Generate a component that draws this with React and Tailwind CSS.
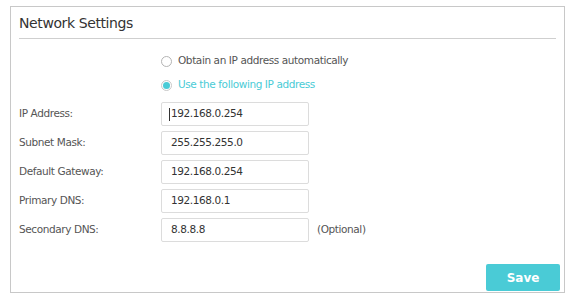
import React from 'react';

const FIELDS = [
  { label: 'IP Address:', value: '192.168.0.254', caret: true },
  { label: 'Subnet Mask:', value: '255.255.255.0' },
  { label: 'Default Gateway:', value: '192.168.0.254' },
  { label: 'Primary DNS:', value: '192.168.0.1' },
  { label: 'Secondary DNS:', value: '8.8.8.8', note: '(Optional)' },
];

const Radio = ({ checked, label }) => (
  <div className="flex items-center h-[24px]">
    <span
      className={`w-[11px] h-[11px] rounded-full border flex items-center justify-center ${
        checked ? 'border-[#c8c8c8]' : 'border-[#b4b4b4]'
      }`}
    >
      {checked && <span className="w-[7px] h-[7px] rounded-full bg-[#4acbd6]" />}
    </span>
    <span className={`ml-[6px] ${checked ? 'text-[#4acbd6]' : 'text-[#555]'}`}>{label}</span>
  </div>
);

export default function App() {
  return (
    <div className="w-[573px] h-[299px] bg-white pt-[6px] pl-[10px] font-['DejaVu_Sans',sans-serif] text-[10.5px] tracking-[-0.4px]">
      <div className="w-[555px] h-[287px] border border-[#c8c8c8] flex flex-col">
        {/* Header */}
        <div className="mx-[8px] h-[32px] border-b border-[#cfcfcf] flex items-center">
          <h1 className="text-[14px] text-[#333] mt-[1px]">Network Settings</h1>
        </div>

        {/* Mode */}
        <div className="pl-[150px] pt-[10px] flex flex-col">
          <Radio label="Obtain an IP address automatically" />
          <Radio checked label="Use the following IP address" />
        </div>

        {/* Fields */}
        <div className="flex flex-col gap-[5px] mt-[5px] pl-[8px]">
          {FIELDS.map((f) => (
            <div key={f.label} className="flex items-center">
              <span className="w-[142px] text-[#555]">{f.label}</span>
              <div className="w-[148px] h-[24px] border border-[#dcdcdc] rounded-[2px] flex items-center pl-[9px] text-[#333]">
                {f.caret && <span className="w-px h-[13px] bg-[#333] -ml-[2px] mr-[1px]" />}
                {f.value}
              </div>
              {f.note && <span className="ml-[8px] text-[#555]">{f.note}</span>}
            </div>
          ))}
        </div>

        {/* Footer */}
        <div className="flex justify-end mt-auto mb-[1px] mr-[4px]">
          <button className="w-[74px] h-[27px] bg-[#4acbd6] rounded-[2px] text-white text-[12px] font-semibold tracking-normal">
            Save
          </button>
        </div>
      </div>
    </div>
  );
}
